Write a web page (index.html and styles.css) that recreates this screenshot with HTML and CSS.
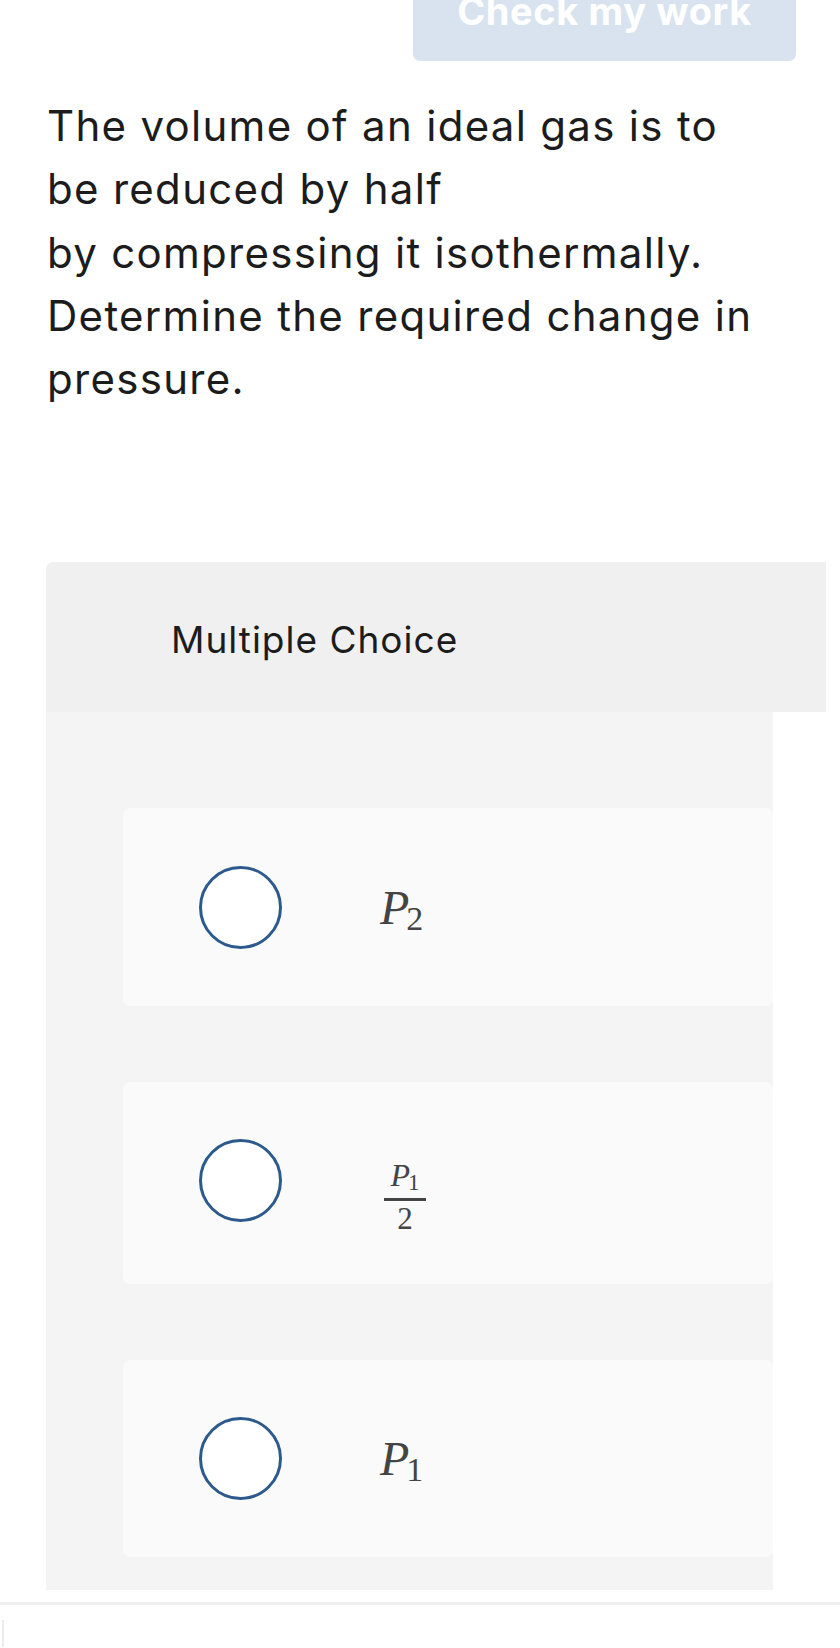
FILE: index.html
```html
<!DOCTYPE html>
<html lang="en">
<head>
<meta charset="utf-8">
<title>Multiple Choice</title>
<link rel="stylesheet" href="styles.css">
</head>
<body>
<div class="topbar">
  <button class="check-btn" type="button"><span class="check-label">Check my work</span></button>
</div>

<p class="question">The volume of an ideal gas is to<br>be reduced by half<br>by compressing it isothermally.<br>Determine the required change in<br>pressure.</p>

<section class="mc">
  <div class="mc-head">Multiple Choice</div>
  <div class="mc-body">
    <div class="choice">
      <span class="radio"></span>
      <span class="math"><span class="mi">P</span><span class="msub">2</span></span>
    </div>
    <div class="choice choice-tall">
      <span class="radio radio-up"></span>
      <span class="frac">
        <span class="num"><span class="mi">P</span><span class="msub">1</span></span>
        <span class="den">2</span>
      </span>
    </div>
    <div class="choice choice-short">
      <span class="radio"></span>
      <span class="math"><span class="mi">P</span><span class="msub">1</span></span>
    </div>
  </div>
</section>

<div class="footer-rule"></div>
<div class="footer">
  <span class="footer-edge"></span>
</div>
</body>
</html>
```

FILE: styles.css
```css
html, body {
  margin: 0;
  padding: 0;
  background: #ffffff;
}

body {
  font-family: Inter, Lato, "Liberation Sans", sans-serif;
  color: #1c1c1c;
  width: 840px;
}

.topbar {
  display: flex;
  justify-content: flex-end;
  padding-right: 44px;
}

.check-btn {
  width: 383px;
  height: 61px;
  border: none;
  border-radius: 0 0 7px 7px;
  background: #d9e3ef;
  color: #ffffff;
  font-family: Inter, Lato, sans-serif;
  font-weight: 700;
  font-size: 38px;
  line-height: 38px;
  padding: 0;
  display: flex;
  justify-content: center;
  align-items: flex-start;
}

.check-label {
  margin-top: -8px;
  letter-spacing: 0.6px;
}

.question {
  margin: 33px 0 0 0;
  padding-left: 47px;
  font-size: 42px;
  line-height: 63.3px;
  font-weight: 400;
  letter-spacing: 1.3px;
  color: #1c1c1c;
}

.mc {
  margin: 152px 0 0 46px;
  width: 780px;
}

.mc-head {
  height: 150px;
  box-sizing: border-box;
  background: #f0f0f0;
  border-radius: 7px 0 0 0;
  padding-left: 125px;
  padding-top: 55px;
  font-size: 37px;
  line-height: 46px;
  letter-spacing: 1px;
  color: #1c1c1c;
}

.mc-body {
  width: 727px;
  background: #f4f4f4;
  padding: 96px 0 33px 77px;
  box-sizing: border-box;
  display: flex;
  flex-direction: column;
  gap: 76px;
}

.choice {
  height: 198px;
  background: #fafafa;
  border-radius: 7px;
  display: flex;
  align-items: center;
  padding-left: 76px;
  box-sizing: border-box;
}

.choice-tall {
  height: 202px;
}

.choice-short {
  height: 197px;
}

.radio {
  width: 83px;
  height: 83px;
  box-sizing: border-box;
  border: 3px solid #2c5a8c;
  border-radius: 50%;
  background: #ffffff;
  flex: none;
}

.radio-up {
  margin-bottom: 6px;
}

.math {
  margin-left: 98px;
  font-family: "Liberation Serif", "DejaVu Serif", serif;
  color: #444444;
  font-size: 48px;
  line-height: normal;
  white-space: nowrap;
}

.mi {
  font-style: italic;
}

.msub {
  font-size: 34px;
  line-height: 0;
  vertical-align: -6px;
  margin-left: -3px;
}

.frac {
  margin-left: 102px;
  margin-top: 28px;
  display: inline-flex;
  flex-direction: column;
  align-items: center;
  font-family: "Liberation Serif", "DejaVu Serif", serif;
  color: #444444;
  width: 42px;
}

.num {
  font-size: 32px;
  line-height: 31px;
  padding-bottom: 7px;
  white-space: nowrap;
}

.num .msub {
  font-size: 23px;
  vertical-align: -4px;
  margin-left: -2px;
}

.den {
  align-self: stretch;
  text-align: center;
  border-top: 3px solid #444444;
  padding-top: 2px;
  font-size: 31px;
  line-height: 31px;
}

.footer-rule {
  margin-top: 12px;
  height: 3px;
  background: #f0f0f0;
}

.footer {
  height: 42px;
  padding-top: 15px;
  padding-left: 2px;
  box-sizing: border-box;
  display: flex;
  align-items: stretch;
}

.footer-edge {
  width: 2px;
  background: #ececec;
}
```
